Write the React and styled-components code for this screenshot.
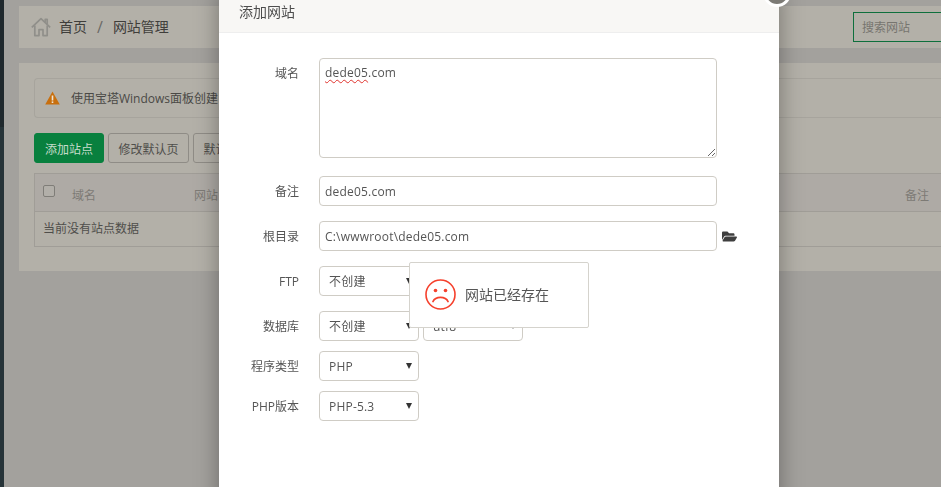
import React from 'react';
import styled, { createGlobalStyle } from 'styled-components';
import { FaFolderOpen } from 'react-icons/fa';

const GlobalStyle = createGlobalStyle`
  html, body {
    margin: 0;
    height: 100%;
    overflow: hidden;
    background: #a3a19d;
    font-family: "Open Sans", "Noto Sans CJK SC", sans-serif;
    font-size: 12px;
    color: #555;
  }
  * { box-sizing: border-box; }
`;

const Page = styled.div`
  display: flex;
  width: 941px;
  height: 487px;
  overflow: hidden;
`;

const Sidebar = styled.div`
  flex: 0 0 4px;
  background: #263338;
`;

const SidebarLogo = styled.div`
  height: 127px;
  background: #1f282d;
`;

const Main = styled.div`
  flex: 1;
  min-width: 0;
  padding: 6px 0 0 15px;
`;

const TopBar = styled.div`
  display: flex;
  align-items: center;
  height: 42px;
  padding-left: 12px;
  background: #b3b0a8;
  margin-bottom: 15px;
`;

const Crumb = styled.span`
  font-size: 14px;
  color: #3f3e3b;
  line-height: 20px;
`;

const Slash = styled.span`
  font-size: 16px;
  color: #6b6a66;
  margin: 0 10px;
`;

const HomeIcon = styled.svg`
  width: 20px;
  height: 20px;
  margin-right: 8px;
`;

const Search = styled.div`
  margin-left: auto;
  width: 88px;
  height: 30px;
  padding: 0 8px;
  line-height: 29px;
  border: 1px solid #0e6f3c;
  border-right: 0;
  color: #77756f;
`;

const Panel = styled.div`
  height: 208px;
  padding: 15px 0 0 15px;
  background: #b3b0a8;
`;

const Alert = styled.div`
  display: flex;
  align-items: center;
  height: 40px;
  padding-left: 10px;
  border: 1px solid #a7a49d;
  border-right: 0;
  border-radius: 4px 0 0 4px;
  color: #4a4946;
  margin-bottom: 15px;
`;

const AlertIcon = styled.svg`
  width: 15px;
  height: 14px;
  margin-right: 11px;
`;

const Buttons = styled.div`
  display: flex;
  gap: 4px;
  margin-bottom: 10px;
`;

const Button = styled.div`
  height: 30px;
  line-height: 31px;
  padding: 0 ${p => (p.$primary ? 10 : 9.5)}px;
  border-radius: 3px;
  border: 1px solid ${p => (p.$primary ? '#08803e' : '#8f8c86')};
  background: ${p => (p.$primary ? '#08803e' : 'transparent')};
  color: ${p => (p.$primary ? '#c6dccb' : '#4f4e4b')};
`;

const Table = styled.div`
  border: 1px solid #a09d97;
  border-right: 0;
`;

const HeadRow = styled.div`
  display: grid;
  grid-template-columns: 29px 122px 1fr 24px;
  align-items: center;
  height: 38px;
  padding-left: 8px;
  padding-right: 12px;
  background: #aeaaa5;
  border-bottom: 1px solid #a09d97;
  color: #7d7a75;
`;

const CheckBox = styled.span`
  display: block;
  width: 12px;
  height: 12px;
  margin-top: -4px;
  border: 1px solid #7f7d78;
  border-radius: 2px;
  background: #b2afa9;
`;

const HeadCell = styled.span`
  padding-top: 4px;
`;

const BodyRow = styled.div`
  height: 34px;
  line-height: 33px;
  padding-left: 8px;
  color: #4f4e4b;
`;

const Modal = styled.div`
  position: fixed;
  left: 219px;
  top: -10px;
  width: 560px;
  height: 520px;
  background: #fff;
  box-shadow: 0 0 22px rgba(0, 0, 0, 0.35);
`;

const ModalHead = styled.div`
  height: 43px;
  padding: 12px 0 0 20px;
  font-size: 14px;
  line-height: 19px;
  color: #4d4d4d;
  background: #f8f7f5;
  border-bottom: 1px solid #eeeeee;
`;

const CloseButton = styled.span`
  position: absolute;
  right: -12px;
  top: -11px;
  width: 28px;
  height: 28px;
  border-radius: 50%;
  border: 3px solid #fff;
  background: #7c7a75;
`;

const ModalBody = styled.div`
  padding-top: 25px;
`;

const Row = styled.div`
  display: flex;
  align-items: flex-start;
  gap: 20px;
  margin-bottom: ${p => p.$gap ?? 15}px;
`;

const Label = styled.div`
  width: 80px;
  height: 30px;
  padding-top: 1px;
  text-align: right;
  line-height: 29px;
  color: #555;
`;

const DomainBox = styled.div`
  width: 398px;
  height: 100px;
  min-width: 398px;
  padding: 4px 5px;
  line-height: 20px;
  letter-spacing: 0.2px;
  color: #555;
  border: 1px solid #cfccc5;
  border-radius: 4px;
  overflow: auto;
  resize: both;
`;

const Squiggle = styled.span`
  text-decoration: underline wavy #e0332e 1px;
  text-underline-offset: 2px;
`;

const Input = styled.div`
  width: 398px;
  height: 30px;
  padding: 0 5px;
  line-height: 29px;
  letter-spacing: 0.2px;
  color: #555;
  border: 1px solid #cfccc5;
  border-radius: 4px;
`;

const FolderButton = styled.span`
  display: flex;
  align-items: center;
  height: 30px;
  margin-left: -15px;
  font-size: 15px;
  color: #3f3f3f;
`;

const SelectWrap = styled.div`
  position: relative;
  width: 100px;
  height: 30px;
  margin-right: ${p => (p.$pair ? '-16px' : 0)};
  &::after {
    content: "";
    position: absolute;
    right: 7px;
    top: 12px;
    border-left: 3px solid transparent;
    border-right: 3px solid transparent;
    border-top: 6px solid #333;
  }
`;

const Select = styled.select`
  appearance: none;
  width: 100%;
  height: 100%;
  padding: 0 0 0 9px;
  background: #fff;
  border: 1px solid #cfccc5;
  border-radius: 4px;
  font: inherit;
  letter-spacing: 0.2px;
  color: #555;
  outline: none;
`;

const Toast = styled.div`
  position: fixed;
  left: 409px;
  top: 262px;
  width: 180px;
  height: 66px;
  display: flex;
  align-items: center;
  gap: 9px;
  padding: 0 0 2px 15px;
  background: #fff;
  border: 1px solid #d5d3cd;
  border-radius: 2px;
  font-size: 14px;
  color: #555;
`;

const SadFace = styled.svg`
  flex: none;
  width: 31px;
  height: 31px;
`;

const Choice = ({ value, pair }) => (
  <SelectWrap $pair={pair}>
    <Select defaultValue={value}>
      <option>{value}</option>
    </Select>
  </SelectWrap>
);

export default function App() {
  return (
    <>
      <GlobalStyle />
      <Page>
        <Sidebar>
          <SidebarLogo />
        </Sidebar>
        <Main>
          <TopBar>
            <HomeIcon viewBox="0 0 20 20" fill="none" stroke="#908f8a" strokeWidth="1.7" strokeLinejoin="round">
              <path d="M0.8 10.4 L10 1.6 L19.2 10.4" />
              <path d="M3.8 8.6 V18.6 H8 V12.6 H12 V18.6 H16.2 V8.6" />
              <path d="M14.2 5.4 V2.4 H16.2 V7.2" />
            </HomeIcon>
            <Crumb>首页</Crumb>
            <Slash>/</Slash>
            <Crumb>网站管理</Crumb>
            <Search>搜索网站</Search>
          </TopBar>
          <Panel>
            <Alert>
              <AlertIcon viewBox="0 0 15 14">
                <path d="M7.5 0.5 L14.8 13.5 H0.2 Z" fill="#c86f0e" />
                <rect x="6.7" y="4.5" width="1.6" height="5" fill="#efe6d8" />
                <rect x="6.7" y="10.4" width="1.6" height="1.6" fill="#efe6d8" />
              </AlertIcon>
              使用宝塔Windows面板创建
            </Alert>
            <Buttons>
              <Button $primary>添加站点</Button>
              <Button>修改默认页</Button>
              <Button>默认站点</Button>
            </Buttons>
            <Table>
              <HeadRow>
                <CheckBox />
                <HeadCell>域名</HeadCell>
                <HeadCell>网站</HeadCell>
                <HeadCell>备注</HeadCell>
              </HeadRow>
              <BodyRow>当前没有站点数据</BodyRow>
            </Table>
          </Panel>
        </Main>
      </Page>
      <Modal>
        <CloseButton />
        <ModalHead>添加网站</ModalHead>
        <ModalBody>
          <Row $gap={18}>
            <Label>域名</Label>
            <DomainBox><Squiggle>dede05</Squiggle>.com</DomainBox>
          </Row>
          <Row>
            <Label>备注</Label>
            <Input>dede05.com</Input>
          </Row>
          <Row>
            <Label>根目录</Label>
            <Input>C:\wwwroot\dede05.com</Input>
            <FolderButton><FaFolderOpen /></FolderButton>
          </Row>
          <Row>
            <Label>FTP</Label>
            <Choice value="不创建" />
          </Row>
          <Row $gap={10}>
            <Label>数据库</Label>
            <Choice value="不创建" pair />
            <Choice value="utf8" />
          </Row>
          <Row $gap={10}>
            <Label>程序类型</Label>
            <Choice value="PHP" />
          </Row>
          <Row $gap={10}>
            <Label>PHP版本</Label>
            <Choice value="PHP-5.3" />
          </Row>
        </ModalBody>
      </Modal>
      <Toast>
        <SadFace viewBox="0 0 31 31" fill="none" stroke="#f5402c" strokeWidth="1.6" strokeLinecap="round">
          <circle cx="15.5" cy="15.5" r="14.5" />
          <circle cx="10.5" cy="11.5" r="1.8" fill="#f5402c" stroke="none" />
          <circle cx="20.5" cy="11.5" r="1.8" fill="#f5402c" stroke="none" />
          <path d="M8 22.5 C10.5 17 20.5 17 23 22.5" strokeWidth="1.8" />
        </SadFace>
        网站已经存在
      </Toast>
    </>
  );
}
